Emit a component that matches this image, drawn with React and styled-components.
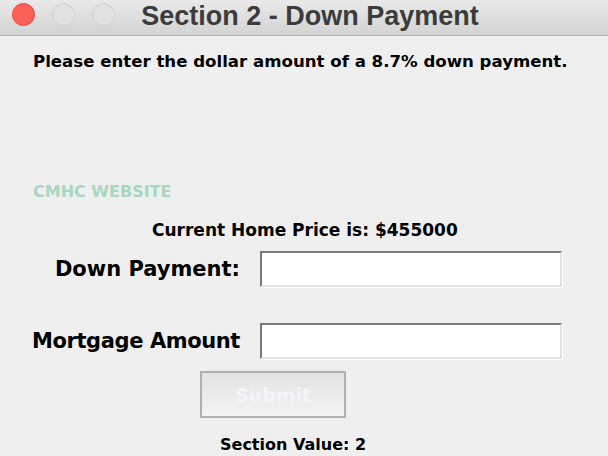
import styled, { createGlobalStyle } from "styled-components";

const GlobalStyle = createGlobalStyle`
  html, body {
    margin: 0;
    padding: 0;
    background: #efefef;
  }
  body {
    font-family: "DejaVu Sans", "Lato", sans-serif;
  }
`;

/**
 * Section 2 window: down payment entry form
 * @returns {JSX.Element}
 */
export default function App() {
  return (
    <Window>
      <GlobalStyle />
      <TitleBar>
        <Lights>
          <Light $color="#fe5f57" $edge="#e2463f" />
          <Light />
          <Light />
        </Lights>
        <Title>Section 2 - Down Payment</Title>
      </TitleBar>
      <Content>
        <Prompt>Please enter the dollar amount of a 8.7% down payment.</Prompt>
        <SiteLink>CMHC WEBSITE</SiteLink>
        <Price>Current Home Price is: $455000</Price>
        <FormGrid>
          <FieldLabel>Down Payment:</FieldLabel>
          <Field />
          <FieldLabel $tight>Mortgage Amount</FieldLabel>
          <Field />
        </FormGrid>
        <SubmitButton disabled>Submit</SubmitButton>
        <SectionValue>Section Value: 2</SectionValue>
      </Content>
    </Window>
  );
}

// styles
const Window = styled.div`
  width: 608px;
  height: 456px;
  overflow: hidden;
  display: flex;
  flex-direction: column;
`;

const TitleBar = styled.div`
  position: relative;
  height: 35px;
  flex-shrink: 0;
  display: flex;
  align-items: center;
  justify-content: center;
  background: linear-gradient(#e9e9e9, #d3d3d3);
  border-bottom: 1px solid #b1b1b1;
`;

const Lights = styled.div`
  position: absolute;
  left: 12px;
  top: 3px;
  display: flex;
  gap: 17px;
`;

const Light = styled.span`
  width: 23px;
  height: 23px;
  border-radius: 50%;
  box-sizing: border-box;
  background: ${(p) => p.$color || "#e1e1e1"};
  border: 1px solid ${(p) => p.$edge || "#d0d0d0"};
`;

const Title = styled.div`
  font-family: "Liberation Sans", Arial, sans-serif;
  font-weight: 700;
  font-size: 27px;
  color: #3b3b3b;
  margin-left: 12px;
  margin-top: -2px;
`;

const Content = styled.div`
  display: flex;
  flex-direction: column;
`;

const Prompt = styled.div`
  margin: 16px 0 0 33px;
  font-weight: 700;
  font-size: 16.6px;
  white-space: nowrap;
  color: #000;
`;

const SiteLink = styled.div`
  margin: 111px 0 0 33px;
  font-weight: 700;
  font-size: 16px;
  color: #a9d6bf;
`;

const Price = styled.div`
  margin: 19px 0 0 152px;
  font-weight: 700;
  font-size: 17px;
  color: #000;
`;

const FormGrid = styled.div`
  display: grid;
  grid-template-columns: 240px 302px;
  column-gap: 20px;
  row-gap: 36px;
  align-items: center;
  margin-top: 11px;
`;

const FieldLabel = styled.div`
  text-align: right;
  white-space: nowrap;
  font-weight: 700;
  font-size: 21px;
  letter-spacing: ${(p) => (p.$tight ? "-0.4px" : "0")};
  color: #000;
`;

const Field = styled.input.attrs({ type: "text" })`
  box-sizing: border-box;
  width: 302px;
  height: 36px;
  margin: 0;
  padding: 0 4px;
  background: #fff;
  border-style: solid;
  border-width: 2px;
  border-color: #7a7a7a #e2e2e2 #e2e2e2 #7a7a7a;
  box-shadow: 1px 1px 0 #fff;
  outline: none;
`;

const SubmitButton = styled.button`
  box-sizing: border-box;
  width: 146px;
  height: 47px;
  margin: 12px 0 0 200px;
  background: linear-gradient(#e2e2e2, #f4f4f4);
  border: 2px solid #b0b0b0;
  border-radius: 0;
  font-family: "DejaVu Sans", "Lato", sans-serif;
  font-weight: 700;
  font-size: 19px;
  color: #f3f5fb;
`;

const SectionValue = styled.div`
  margin: 17px 0 0 220px;
  font-weight: 700;
  font-size: 16px;
  color: #000;
`;
